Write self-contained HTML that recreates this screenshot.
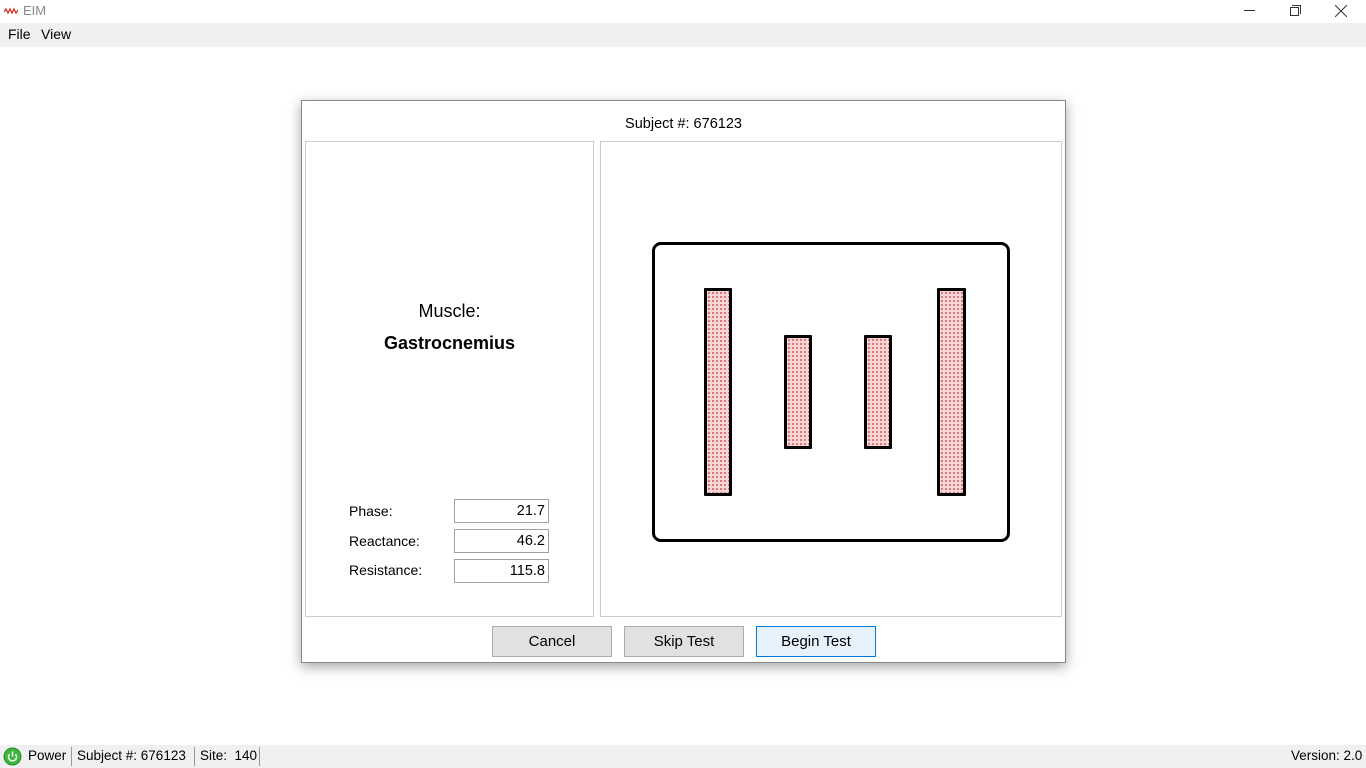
<!DOCTYPE html>
<html><head><meta charset="utf-8"><style>
*{margin:0;padding:0;box-sizing:border-box}
body{width:1366px;height:768px;position:relative;background:#fff;font-family:"Liberation Sans","DejaVu Sans",sans-serif;overflow:hidden;color:#000}
.abs{position:absolute}
.title{left:0;top:0;width:1366px;height:23px;background:#fff}
.menu{left:0;top:23px;width:1366px;height:24px;background:#f0f0f0;font-size:14px}
.dlg{left:301px;top:100px;width:765px;height:563px;border:1px solid #888;background:#fff;box-shadow:0 4px 12px rgba(0,0,0,0.35)}
.panel{border:1px solid #ccc}
.btn{top:626px;width:120px;height:31px;border:1px solid #adadad;background:#e1e1e1;font-size:15px;text-align:center;line-height:30px}
.tb{left:454px;width:95px;height:24px;border:1px solid #a0a0a0;text-align:right;padding-right:3px;font-size:14.5px;line-height:23px}
.lbl{left:349px;font-size:14px}
.bar{border:3px solid #000;background-color:#f6d6d6;background-image:radial-gradient(#d06060 0.8px,transparent 1.1px);background-size:4px 4px;border-radius:1px}
.status{left:0;top:745px;width:1366px;height:23px;background:#f0f0f0;font-size:13.5px;line-height:22px}
.sep{top:747px;width:1px;height:19px;background:#999}
</style></head><body>
<div class="abs title">
 <svg class="abs" style="left:4px;top:7px" width="14" height="8"><polyline points="0,5 2,2 4,6 6,2 8,6 10,2 12,6 14,3" fill="none" stroke="#d03020" stroke-width="1.3"/></svg>
 <div class="abs" style="left:23px;top:3px;font-size:13px;color:#888">EIM</div>
 <div class="abs" style="left:1244px;top:10px;width:11px;height:1px;background:#333"></div>
 <div class="abs" style="left:1290px;top:7px;width:9px;height:9px;border:1px solid #333"></div>
 <div class="abs" style="left:1292px;top:5px;width:9px;height:9px;border-top:1px solid #333;border-right:1px solid #333"></div>
 <svg class="abs" style="left:1335px;top:5px" width="12" height="12"><path d="M0 0L12 12M12 0L0 12" stroke="#333" stroke-width="1"/></svg>
</div>
<div class="abs menu"><span class="abs" style="left:8px;top:3px">File</span><span class="abs" style="left:41px;top:3px">View</span></div>

<div class="abs dlg"></div>
<div class="abs" style="left:301px;top:116px;width:765px;text-align:center;font-size:14.5px">Subject #: 676123</div>
<div class="abs panel" style="left:305px;top:141px;width:289px;height:476px"></div>
<div class="abs panel" style="left:600px;top:141px;width:462px;height:476px"></div>
<div class="abs" style="left:305px;top:301px;width:289px;text-align:center;font-size:18px">Muscle:</div>
<div class="abs" style="left:305px;top:333px;width:289px;text-align:center;font-size:18px;font-weight:bold">Gastrocnemius</div>
<div class="abs lbl" style="top:503px">Phase:</div>
<div class="abs lbl" style="top:533px">Reactance:</div>
<div class="abs lbl" style="top:562px">Resistance:</div>
<div class="abs tb" style="top:499px">21.7</div>
<div class="abs tb" style="top:529px">46.2</div>
<div class="abs tb" style="top:559px">115.8</div>

<div class="abs" style="left:652px;top:242px;width:358px;height:300px;border:3px solid #000;border-radius:9px"></div>
<div class="abs bar" style="left:704px;top:288px;width:28px;height:208px"></div>
<div class="abs bar" style="left:784px;top:335px;width:28px;height:114px"></div>
<div class="abs bar" style="left:864px;top:335px;width:28px;height:114px"></div>
<div class="abs bar" style="left:937px;top:288px;width:29px;height:208px"></div>

<div class="abs btn" style="left:492px">Cancel</div>
<div class="abs btn" style="left:624px">Skip Test</div>
<div class="abs btn" style="left:756px;border-color:#0078d7;background:#e5f1fb">Begin Test</div>

<div class="abs status">
 <svg class="abs" style="left:3px;top:2px" width="19" height="19"><circle cx="9.5" cy="9.5" r="8.5" fill="#3cb83c" stroke="#2a8a2a"/><path d="M6.5 7.2A4 4 0 1 0 12.5 7.2" fill="none" stroke="#fff" stroke-width="1.5"/><path d="M9.5 4.5V9.5" stroke="#fff" stroke-width="1.5"/></svg>
 <span class="abs" style="left:28px">Power</span>
 <span class="abs" style="left:77px">Subject #:&nbsp;676123</span>
 <span class="abs" style="left:200px">Site:&nbsp; 140</span>
 <span class="abs" style="left:1291px">Version: 2.0</span>
</div>
<div class="abs sep" style="left:71px"></div>
<div class="abs sep" style="left:194px"></div>
<div class="abs sep" style="left:259px"></div>
</body></html>
